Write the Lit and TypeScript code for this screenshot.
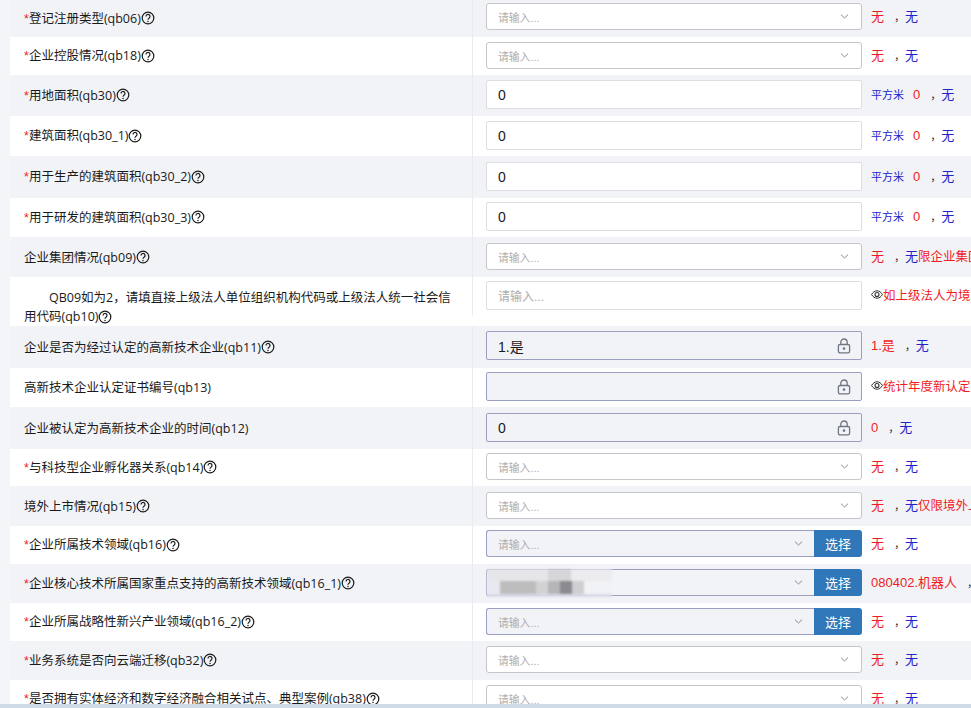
import { LitElement, html, css, nothing } from "lit";
import { customElement } from "lit/decorators.js";

type Kind = "select" | "text" | "empty" | "locked" | "picker" | "blurred";
interface Row {
  req?: boolean;
  label: string;
  help?: boolean;
  kind: Kind;
  h: number;
  top: number;
  value?: string;
  red?: string;
  unit?: string;
  note?: string;
  eye?: boolean;
  tall?: boolean;
}

const rows: Row[] = [
  { req: true, label: "登记注册类型(qb06)", help: true, kind: "select", h: 37, top: 3 },
  { req: true, label: "企业控股情况(qb18)", help: true, kind: "select", h: 38, top: 5 },
  { req: true, label: "用地面积(qb30)", help: true, kind: "text", value: "0", red: "0", unit: "平方米", h: 41, top: 5 },
  { req: true, label: "建筑面积(qb30_1)", help: true, kind: "text", value: "0", red: "0", unit: "平方米", h: 40, top: 5 },
  { req: true, label: "用于生产的建筑面积(qb30_2)", help: true, kind: "text", value: "0", red: "0", unit: "平方米", h: 42, top: 6 },
  { req: true, label: "用于研发的建筑面积(qb30_3)", help: true, kind: "text", value: "0", red: "0", unit: "平方米", h: 39, top: 4 },
  { label: "企业集团情况(qb09)", help: true, kind: "select", note: "限企业集团母公司填报", h: 40, top: 6 },
  { label: "QB09如为2，请填直接上级法人单位组织机构代码或上级法人统一社会信用代码(qb10)", help: true, kind: "empty", eye: true, note: "如上级法人为境外企业请填写", h: 49, top: 4, tall: true },
  { label: "企业是否为经过认定的高新技术企业(qb11)", help: true, kind: "locked", value: "1.是", red: "1.是", h: 42, top: 5 },
  { label: "高新技术企业认定证书编号(qb13)", kind: "locked", eye: true, note: "统计年度新认定的高新技术企业", h: 39, top: 4 },
  { label: "企业被认定为高新技术企业的时间(qb12)", kind: "locked", value: "0", red: "0", h: 42, top: 6 },
  { req: true, label: "与科技型企业孵化器关系(qb14)", help: true, kind: "select", h: 37, top: 4 },
  { label: "境外上市情况(qb15)", help: true, kind: "select", note: "仅限境外上市企业填报", h: 40, top: 6 },
  { req: true, label: "企业所属技术领域(qb16)", help: true, kind: "picker", h: 38, top: 4 },
  { req: true, label: "企业核心技术所属国家重点支持的高新技术领域(qb16_1)", help: true, kind: "blurred", red: "080402.机器人", h: 39, top: 5 },
  { req: true, label: "企业所属战略性新兴产业领域(qb16_2)", help: true, kind: "picker", h: 38, top: 5 },
  { req: true, label: "业务系统是否向云端迁移(qb32)", help: true, kind: "select", h: 39, top: 5 },
  { req: true, label: "是否拥有实体经济和数字经济融合相关试点、典型案例(qb38)", help: true, kind: "select", h: 38, top: 5 },
];

const mosaicTop: [number, string][] = [
  [61, "#e6e6e9"], [23, "#d6d6d9"], [41, "#ececef"],
];
const mosaicBottom: [number, string][] = [
  [13, "#e8e9f0"], [36, "#bdbdbd"], [12, "#d2d2d2"], [12, "#b6b6b9"], [12, "#8b8b8f"], [12, "#cfcfd2"], [28, "#f1f2f6"],
];

const chevron = html`<svg class="chev" width="9" height="5" viewBox="0 0 9 5"><path d="M1 .7 4.5 4 8 .7" fill="none" stroke="#8a8a8a" stroke-width="1"/></svg>`;
const lock = html`<svg class="lock" width="14" height="16" viewBox="0 0 14 16"><path d="M3.8 6.5V4.2a3.2 3.2 0 0 1 6.4 0v2.3" fill="none" stroke="#6f7684" stroke-width="1.3"/><rect x="1.4" y="6.5" width="11.2" height="8.4" rx="1.6" fill="none" stroke="#6f7684" stroke-width="1.3"/><circle cx="7" cy="10.6" r="1.3" fill="#6f7684"/></svg>`;
const help = html`<svg class="help" width="14" height="14" viewBox="0 0 14 14"><circle cx="7" cy="7" r="5.8" fill="none" stroke="#1a1a1a" stroke-width="1.2"/><path d="M5 5.5a2 2 0 1 1 3 1.7c-.7.4-1 .8-1 1.5" fill="none" stroke="#1a1a1a" stroke-width="1.2"/><circle cx="7" cy="10.4" r=".75" fill="#1a1a1a"/></svg>`;
const eye = html`<svg class="eye" width="12" height="9" viewBox="0 0 12 9"><path d="M.6 4.5C2 2 3.8.8 6 .8s4 1.2 5.4 3.7C10 7 8.2 8.2 6 8.2S2 7 .6 4.5Z" fill="none" stroke="#333" stroke-width="1"/><circle cx="6" cy="4.5" r="2" fill="none" stroke="#333" stroke-width="1.1"/></svg>`;

@customElement("app-root")
export class AppRoot extends LitElement {
  static styles = css`
    :host {
      display: flex;
      flex-direction: column;
      width: 971px;
      height: 708px;
      overflow: hidden;
      background: #f3f5f9;
      font-family: "Liberation Sans", "Noto Sans CJK SC", sans-serif;
      color: #1a1a1a;
    }
    .list { flex: 1; min-height: 0; overflow: hidden; padding-left: 10px; }
    .row { display: flex; background: #fff; width: 961px; white-space: nowrap; overflow: hidden; box-sizing: border-box; }
    .row:nth-child(odd) { background: #f1f3f7; }
    .label {
      flex: none;
      width: 463px;
      box-sizing: border-box;
      padding: 0 10px 0 14px;
      border-right: 1px solid #e9ebf0;
      font-family: "Open Sans", "Noto Sans CJK SC", sans-serif;
      font-size: 12.5px;
      line-height: 19px;
      display: flex;
      align-items: center;
    }
    .label.tall {
      display: block;
      white-space: normal;
      height: 39px;
      padding-top: 11px;
      text-indent: 25px;
    }
    .star { color: #f01c24; font-family: "Liberation Sans", sans-serif; }
    .help { flex: none; margin-left: 0; vertical-align: -2.5px; }
    .field { flex: 1; min-width: 0; display: flex; align-items: center; align-self: flex-start; padding-left: 13px; }
    .ctl {
      flex: none;
      position: relative;
      box-sizing: border-box;
      width: 376px;
      display: flex;
      align-items: center;
      padding: 0 11px;
      font-size: 14px;
      background: #fff;
      border: 1px solid #dcdee3;
      height: 29px;
      border-radius: 2px;
    }
    .ctl.select { height: 27px; border-color: #c4c6cc; border-radius: 3px; }
    .ctl.locked { background: #f2f3f7; border-color: #9a9fc2; }
    .ph { color: #aeaeae; font-size: 10.8px; }
    .ctl.empty .ph { font-size: 12px; }
    .chev { margin-left: auto; margin-right: 1px; }
    .lock { margin-left: auto; margin-right: -1px; }
    .ctl.picker { padding: 0; border: none; height: 27px; background: none; }
    .pick-in {
      flex: 1;
      position: relative;
      align-self: stretch;
      display: flex;
      align-items: center;
      padding: 0 10px 0 11px;
      background: #f2f3f7;
      border: 1px solid #9a9fc2;
      border-right: none;
      border-radius: 3px 0 0 3px;
    }
    .btn {
      flex: none;
      width: 48px;
      align-self: stretch;
      display: flex;
      align-items: center;
      justify-content: center;
      background: #2f77b8;
      color: #fff;
      font-size: 13px;
      border-radius: 0 3px 3px 0;
    }
    .mosaic {
      position: absolute;
      left: 0;
      top: -1px;
      display: flex;
      flex-direction: column;
      filter: blur(0.8px);
    }
    .m-row { display: flex; height: 12px; }
    .m-row.low { height: 13px; }
    .m-row i { display: block; height: 100%; }
    .m-strip { height: 3px; width: 125px; background: #d9dce9; }
    .vals { display: flex; align-items: center; margin-left: 9px; font-size: 13px; line-height: 16px; flex: none; }
    .red { color: #f01c24; }
    .blue { color: #2323cc; }
    .unit { color: #2323cc; font-size: 11px; margin-right: 9px; }
    .comma { display: inline-block; width: 11px; margin-left: 10px; color: #333; font-size: 11px; }
    .note { color: #f01c24; font-size: 12.5px; }
    .eye { flex: none; margin-right: 0; margin-top: -3px; }
    .bar { flex: none; height: 4px; background: #cfdbe6; }
  `;

  private control(r: Row) {
    switch (r.kind) {
      case "select":
        return html`<div class="ctl select"><span class="ph">请输入...</span>${chevron}</div>`;
      case "text":
        return html`<div class="ctl"><span>${r.value}</span></div>`;
      case "empty":
        return html`<div class="ctl empty"><span class="ph">请输入...</span></div>`;
      case "locked":
        return html`<div class="ctl locked"><span>${r.value ?? ""}</span>${lock}</div>`;
      case "picker":
        return html`<div class="ctl picker"><div class="pick-in"><span class="ph">请输入...</span>${chevron}</div><div class="btn">选择</div></div>`;
      case "blurred":
        return html`<div class="ctl picker"><div class="pick-in">${chevron}
          <div class="mosaic">
            <div class="m-row">${mosaicTop.map(([w, c]) => html`<i style="width:${w}px;background:${c}"></i>`)}</div>
            <div class="m-row low">${mosaicBottom.map(([w, c]) => html`<i style="width:${w}px;background:${c}"></i>`)}</div>
            <div class="m-strip"></div>
          </div></div><div class="btn">选择</div></div>`;
    }
  }

  private values(r: Row) {
    if (r.eye) return html`<div class="vals">${eye}<span class="note">${r.note}</span></div>`;
    return html`<div class="vals">
      ${r.unit ? html`<span class="unit">${r.unit}</span>` : nothing}
      <span class="red">${r.red ?? "无"}</span><span class="comma">，</span><span class="blue">无</span>
      ${r.note ? html`<span class="note">${r.note}</span>` : nothing}
    </div>`;
  }

  render() {
    return html`<div class="list">
        ${rows.map(
          (r) => html`<div class="row" style="height:${r.h}px">
            <div class="label ${r.tall ? "tall" : ""}">
              <span>${r.req ? html`<span class="star">*</span>` : nothing}${r.label}${r.help ? help : nothing}</span>
            </div>
            <div class="field" style="margin-top:${r.top}px">${this.control(r)}${this.values(r)}</div>
          </div>`
        )}
      </div>
      <div class="bar"></div>`;
  }
}
